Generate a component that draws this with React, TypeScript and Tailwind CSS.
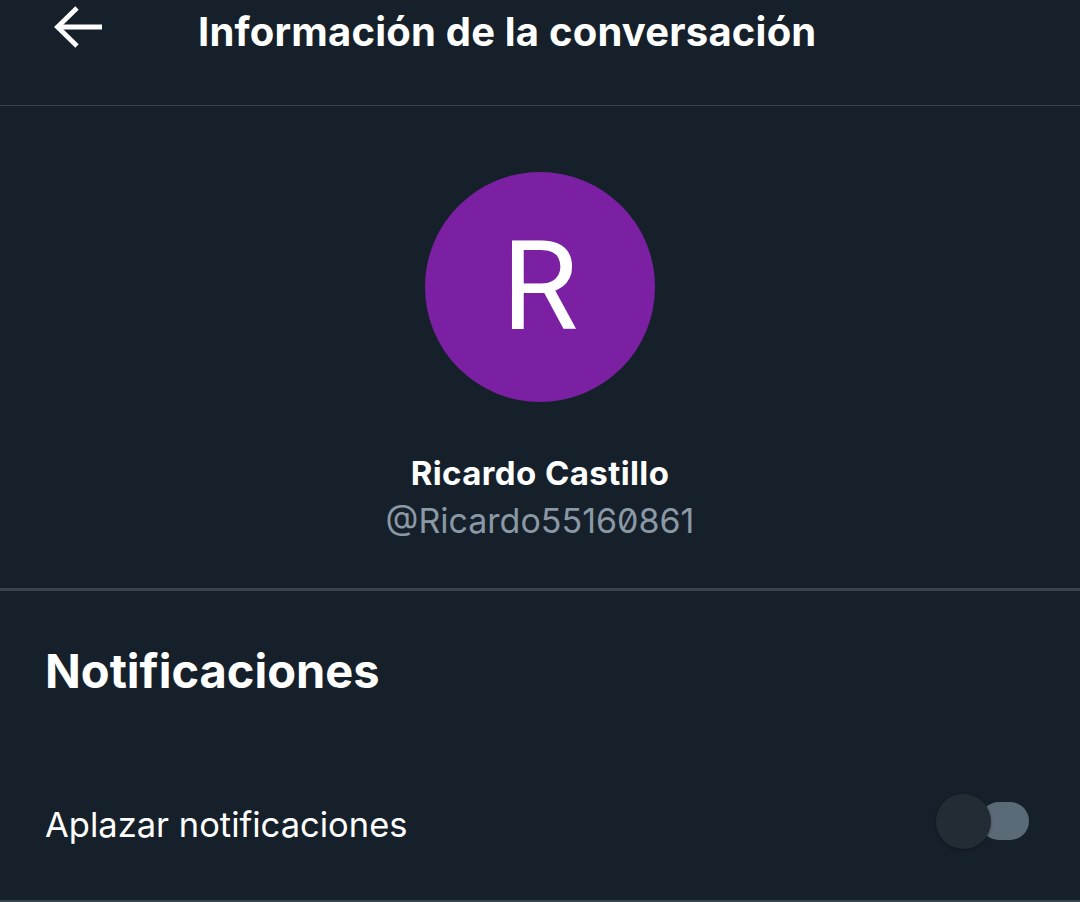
export default function App() {
  return (
    <div
      className="min-h-[902px] w-full bg-[#16202a] text-white"
      style={{ fontFamily: "Inter, 'Noto Sans', sans-serif" }}
    >
      {/* Header */}
      <header className="flex h-[106px] items-start border-b border-[#38444d]">
        <button className="ml-[52px] mt-[6px] flex h-[44px] w-[52px] items-center justify-center" aria-label="Atrás">
          <svg viewBox="0 0 52 44" className="h-[44px] w-[52px]" fill="none" stroke="#ffffff" strokeWidth="4.8">
            <path d="M50 21H5" />
            <path d="M25 2L5.5 21L25 40" />
          </svg>
        </button>
        <h1 className="ml-[94px] mt-[8px] text-[40px] font-bold leading-[48px] tracking-[0.2px]">
          Información de la conversación
        </h1>
      </header>

      {/* Profile */}
      <section className="flex flex-col items-center border-b-[3px] border-[#38444d] pb-[46px] pt-[66px]">
        <div className="flex h-[230px] w-[230px] items-center justify-center rounded-full bg-[#7b20a2]">
          <span
            className="text-[124px] font-normal leading-none text-white"
            style={{ fontFamily: "Roboto, 'Liberation Sans', sans-serif" }}
          >
            R
          </span>
        </div>
        <div className="mt-[50px] text-[33px] font-bold leading-[42px] tracking-[0.4px]">Ricardo Castillo</div>
        <div className="mt-[6px] text-[34px] leading-[42px] text-[#8b98a5] slashed-zero">@Ricardo55160861</div>
      </section>

      {/* Notifications */}
      <section className="border-b-[3px] border-[#38444d]">
        <h2 className="px-[45px] pt-[48px] text-[47px] font-bold leading-[64px]">Notificaciones</h2>
        <div className="mt-[91px] flex items-center justify-between pb-[45px] pl-[45px] pr-[51px]">
          <span className="text-[34.5px] leading-[46px]">Aplazar notificaciones</span>
          <div className="relative mb-[6px] h-[55px] w-[93px]">
            <div className="absolute right-0 top-[8px] h-[38px] w-[49px] rounded-full bg-[#5b6a77]" />
            <div className="absolute left-0 top-0 h-[55px] w-[55px] rounded-full bg-[#222c35] shadow-[0_1px_3px_rgba(0,0,0,0.35)]" />
          </div>
        </div>
      </section>
    </div>
  );
}
